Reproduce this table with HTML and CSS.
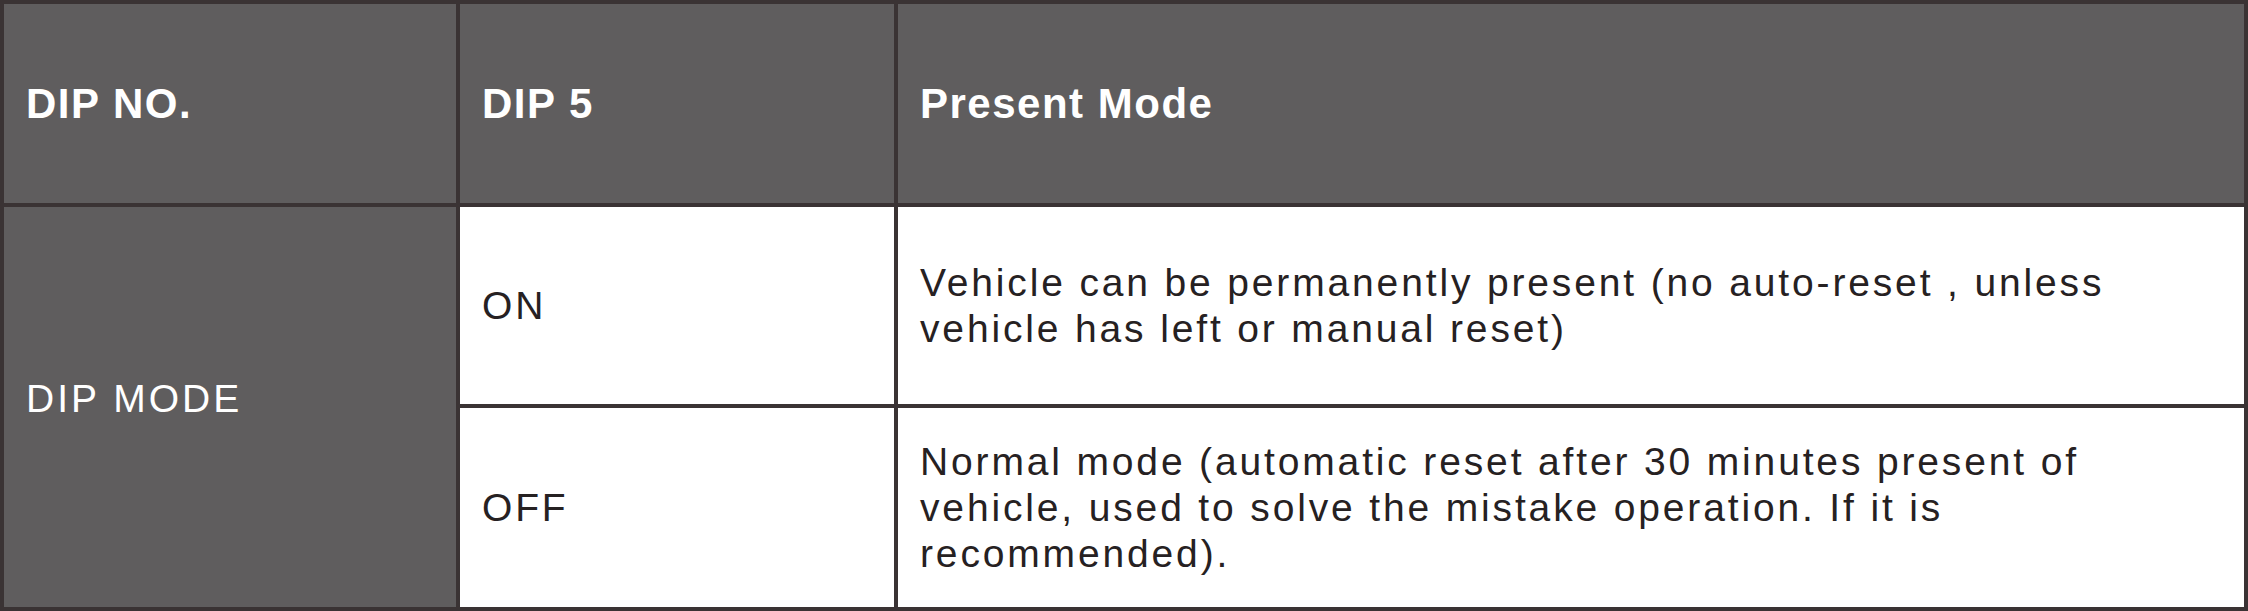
FILE: index.html
```html
<!DOCTYPE html>
<html lang="en">
<head>
<meta charset="utf-8">
<title>DIP 5 Present Mode</title>
<link rel="stylesheet" href="styles.css">
</head>
<body>
<div class="dip-table">
  <div class="cell head">DIP NO.</div>
  <div class="cell head">DIP 5</div>
  <div class="cell head">Present Mode</div>
  <div class="cell side"><span class="side-label">DIP MODE</span></div>
  <div class="cell body">ON</div>
  <div class="cell body">Vehicle can be permanently present (no auto-reset , unless<br>vehicle has left or manual reset)</div>
  <div class="cell body">OFF</div>
  <div class="cell body">Normal mode (automatic reset after 30 minutes present of<br>vehicle, used to solve the mistake operation. If it is<br>recommended).</div>
</div>
</body>
</html>
```
FILE: styles.css
```css
html, body {
  margin: 0;
  padding: 0;
  background: #ffffff;
}

.dip-table {
  box-sizing: border-box;
  width: 2248px;
  height: 611px;
  padding: 4px;
  background: #3a3334;
  display: grid;
  grid-template-columns: 452px 434px 1fr;
  grid-template-rows: 199px 197px 199px;
  column-gap: 4px;
  row-gap: 4px;
  font-family: "Liberation Sans", Arial, sans-serif;
}

.cell {
  display: flex;
  align-items: center;
  padding-left: 22px;
  box-sizing: border-box;
}

.head {
  background: #5f5d5e;
  color: #ffffff;
  font-weight: bold;
  font-size: 42px;
  letter-spacing: 1.5px;
}

.side {
  background: #5f5d5e;
  color: #ffffff;
  grid-row: 2 / span 2;
  grid-column: 1;
  font-size: 39px;
  letter-spacing: 3px;
  padding-bottom: 16px;
}

.body {
  background: #ffffff;
  color: #262122;
  font-size: 39px;
  line-height: 46px;
  letter-spacing: 2.85px;
}
```
